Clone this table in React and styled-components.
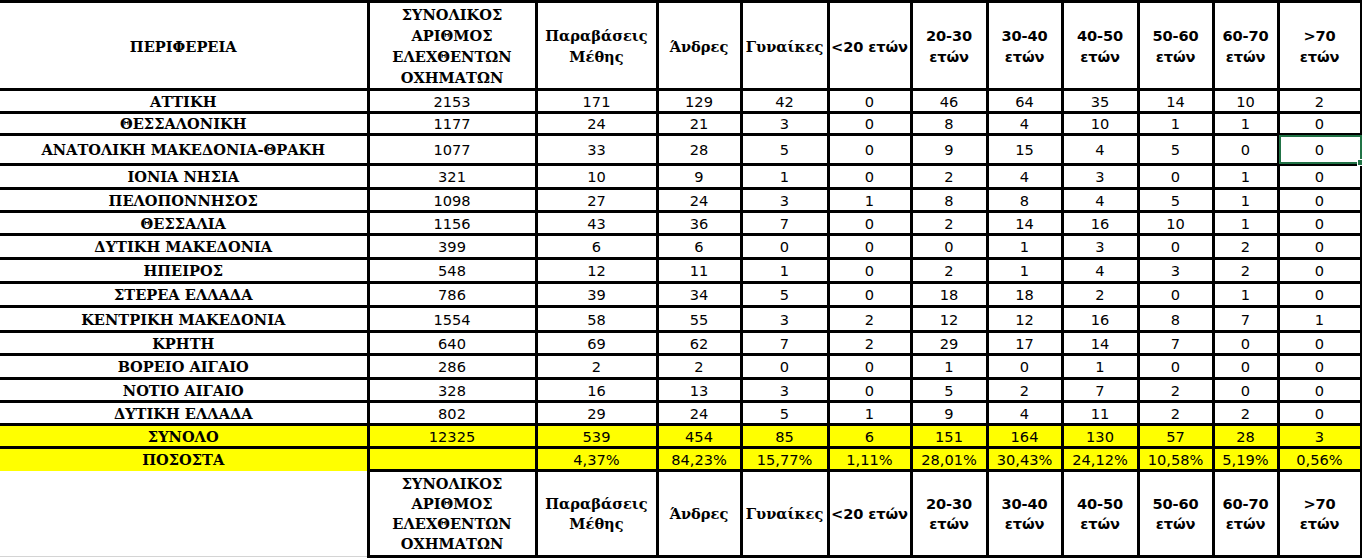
import React from "react";
import styled, { createGlobalStyle, css } from "styled-components";

const GlobalStyle = createGlobalStyle`
  html, body {
    margin: 0;
    padding: 0;
    background: #ffffff;
  }
`;

const SERIF = `"DejaVu Serif", "Liberation Serif", serif`;
const SANS = `"DejaVu Sans", "Liberation Sans", sans-serif`;
const LINE = "3px solid #000";

// πλάτη στηλών όπως στο φύλλο
const WIDTHS = [368, 168, 121, 84, 87, 83, 76, 75, 76, 75, 65, 83];

const HEADERS = [
  { label: ["ΠΕΡΙΦΕΡΕΙΑ"], font: "serif" },
  { label: ["ΣΥΝΟΛΙΚΟΣ", "ΑΡΙΘΜΟΣ", "ΕΛΕΧΘΕΝΤΩΝ", "ΟΧΗΜΑΤΩΝ"], font: "serif" },
  { label: ["Παραβάσεις", "Μέθης"], font: "serif" },
  { label: ["Άνδρες"], font: "serif" },
  { label: ["Γυναίκες"], font: "serif" },
  { label: ["<20 ετών"], font: "sans" },
  { label: ["20-30", "ετών"], font: "sans" },
  { label: ["30-40", "ετών"], font: "sans" },
  { label: ["40-50", "ετών"], font: "sans" },
  { label: ["50-60", "ετών"], font: "sans" },
  { label: ["60-70", "ετών"], font: "sans" },
  { label: [">70", "ετών"], font: "sans" },
];

const ROWS = [
  ["ΑΤΤΙΚΗ", 2153, 171, 129, 42, 0, 46, 64, 35, 14, 10, 2],
  ["ΘΕΣΣΑΛΟΝΙΚΗ", 1177, 24, 21, 3, 0, 8, 4, 10, 1, 1, 0],
  ["ΑΝΑΤΟΛΙΚΗ ΜΑΚΕΔΟΝΙΑ-ΘΡΑΚΗ", 1077, 33, 28, 5, 0, 9, 15, 4, 5, 0, 0],
  ["ΙΟΝΙΑ ΝΗΣΙΑ", 321, 10, 9, 1, 0, 2, 4, 3, 0, 1, 0],
  ["ΠΕΛΟΠΟΝΝΗΣΟΣ", 1098, 27, 24, 3, 1, 8, 8, 4, 5, 1, 0],
  ["ΘΕΣΣΑΛΙΑ", 1156, 43, 36, 7, 0, 2, 14, 16, 10, 1, 0],
  ["ΔΥΤΙΚΗ ΜΑΚΕΔΟΝΙΑ", 399, 6, 6, 0, 0, 0, 1, 3, 0, 2, 0],
  ["ΗΠΕΙΡΟΣ", 548, 12, 11, 1, 0, 2, 1, 4, 3, 2, 0],
  ["ΣΤΕΡΕΑ ΕΛΛΑΔΑ", 786, 39, 34, 5, 0, 18, 18, 2, 0, 1, 0],
  ["ΚΕΝΤΡΙΚΗ ΜΑΚΕΔΟΝΙΑ", 1554, 58, 55, 3, 2, 12, 12, 16, 8, 7, 1],
  ["ΚΡΗΤΗ", 640, 69, 62, 7, 2, 29, 17, 14, 7, 0, 0],
  ["ΒΟΡΕΙΟ ΑΙΓΑΙΟ", 286, 2, 2, 0, 0, 1, 0, 1, 0, 0, 0],
  ["ΝΟΤΙΟ ΑΙΓΑΙΟ", 328, 16, 13, 3, 0, 5, 2, 7, 2, 0, 0],
  ["ΔΥΤΙΚΗ ΕΛΛΑΔΑ", 802, 29, 24, 5, 1, 9, 4, 11, 2, 2, 0],
];
const ROW_HEIGHTS = [23, 22, 30, 24, 23, 23, 24, 24, 24, 25, 23, 24, 23, 23];

const TOTAL = ["ΣΥΝΟΛΟ", 12325, 539, 454, 85, 6, 151, 164, 130, 57, 28, 3];
const PERCENT = ["ΠΟΣΟΣΤΑ", "", "4,37%", "84,23%", "15,77%", "1,11%", "28,01%", "30,43%", "24,12%", "10,58%", "5,19%", "0,56%"];

const Sheet = styled.table`
  border-collapse: collapse;
  table-layout: fixed;
  width: ${WIDTHS.reduce((a, b) => a + b, 0)}px;
  color: #000;
`;

const Row = styled.tr`
  height: ${(p) => p.$h}px;
  background: ${(p) => (p.$yellow ? "#ffff00" : "#ffffff")};
`;

const cellBase = css`
  border: ${LINE};
  padding: 0;
  text-align: center;
  vertical-align: middle;
  white-space: nowrap;
  &:first-child {
    border-left: none;
  }
`;

const HeadCell = styled.th`
  ${cellBase};
  font-family: ${(p) => (p.$font === "sans" ? SANS : SERIF)};
  font-size: 14.6px;
  font-weight: bold;
  line-height: ${(p) => p.$lh}px;
  padding-top: 1px;
  ${(p) => p.$font === "sans" && "letter-spacing: -0.1px;"}
`;

const BlankHead = styled.th`
  border: none;
  border-bottom: 1px solid #d4d4d4;
  background: #ffffff;
`;

const RegionCell = styled.td`
  ${cellBase};
  font-family: ${SERIF};
  font-size: 14.6px;
  font-weight: bold;
  ${(p) => p.$open && "border-bottom: none;"}
`;

const NumCell = styled.td`
  ${cellBase};
  position: relative;
  font-family: ${SANS};
  font-size: 14.6px;
  font-weight: normal;
`;

// πράσινο πλαίσιο επιλεγμένου κελιού του Excel
const Selection = styled.div`
  position: absolute;
  inset: -1px -2px -1px -1px;
  border: 2px solid #217346;
  pointer-events: none;

  &::after {
    content: "";
    position: absolute;
    right: -4px;
    bottom: -4px;
    width: 5px;
    height: 5px;
    background: #217346;
    border: 1px solid #fff;
  }
`;

const HeaderRow = ({ blankFirst, h, lh }) => (
  <Row $h={h}>
    {HEADERS.map((col, i) =>
      blankFirst && i === 0 ? (
        <BlankHead key={i} />
      ) : (
        <HeadCell key={i} $font={col.font} $lh={lh}>
          {col.label.map((line, j) => (
            <React.Fragment key={j}>
              {j > 0 && <br />}
              {line}
            </React.Fragment>
          ))}
        </HeadCell>
      )
    )}
  </Row>
);

const DataRow = ({ cells, h, yellow, open, selected }) => (
  <Row $h={h} $yellow={yellow}>
    <RegionCell $open={open}>{cells[0]}</RegionCell>
    {cells.slice(1).map((v, i) => (
      <NumCell key={i}>
        {v}
        {selected === i + 1 && <Selection />}
      </NumCell>
    ))}
  </Row>
);

export default function App() {
  return (
    <>
      <GlobalStyle />
      <Sheet>
        <colgroup>
          {WIDTHS.map((w, i) => (
            <col key={i} style={{ width: w }} />
          ))}
        </colgroup>
        <tbody>
          <HeaderRow h={88} lh={21} />
          {ROWS.map((r, i) => (
            <DataRow key={r[0]} cells={r} h={ROW_HEIGHTS[i]} selected={i === 2 ? 11 : undefined} />
          ))}
          <DataRow cells={TOTAL} h={23} yellow />
          <DataRow cells={PERCENT} h={23} yellow open />
          <HeaderRow h={86} lh={20} blankFirst />
        </tbody>
      </Sheet>
    </>
  );
}
